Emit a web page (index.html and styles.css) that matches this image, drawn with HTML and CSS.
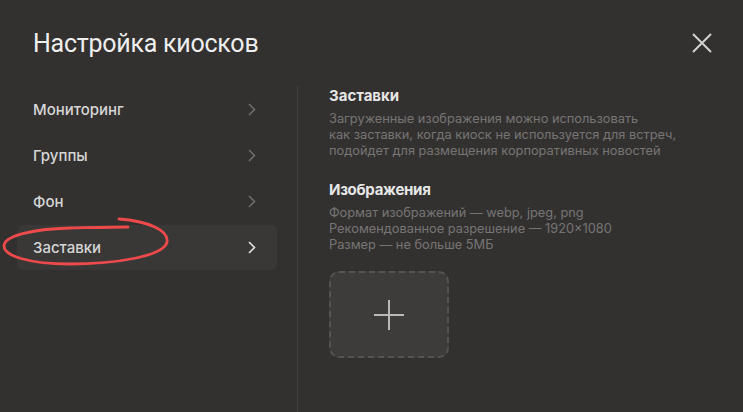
FILE: index.html
```html
<!DOCTYPE html>
<html lang="ru">
<head>
    <meta charset="UTF-8">
    <meta name="viewport" content="width=device-width, initial-scale=1.0">
    <title>Настройка киосков</title>
    <link rel="stylesheet" href="styles.css">
</head>
<body>
    <div class="dialog">
        <!-- Dialog header with title and close button -->
        <header class="dialog-header">
            <h1 class="dialog-title">Настройка киосков</h1>
            <button class="close-btn" aria-label="Закрыть">
                <svg width="20" height="20" viewBox="0 0 20 20">
                    <path d="M1 1 L19 19 M19 1 L1 19" stroke="#d2d2d2" stroke-width="2" fill="none"/>
                </svg>
            </button>
        </header>

        <div class="dialog-body">
            <!-- Left navigation -->
            <nav class="nav">
                <a class="nav-item">
                    <span>Мониторинг</span>
                    <svg class="chevron" width="8" height="13" viewBox="0 0 8 13"><path d="M1 1 L6.5 6.5 L1 12" stroke="currentColor" stroke-width="1.6" fill="none"/></svg>
                </a>
                <a class="nav-item">
                    <span>Группы</span>
                    <svg class="chevron" width="8" height="13" viewBox="0 0 8 13"><path d="M1 1 L6.5 6.5 L1 12" stroke="currentColor" stroke-width="1.6" fill="none"/></svg>
                </a>
                <a class="nav-item">
                    <span>Фон</span>
                    <svg class="chevron" width="8" height="13" viewBox="0 0 8 13"><path d="M1 1 L6.5 6.5 L1 12" stroke="currentColor" stroke-width="1.6" fill="none"/></svg>
                </a>
                <a class="nav-item active">
                    <span>Заставки</span>
                    <svg class="chevron" width="8" height="13" viewBox="0 0 8 13"><path d="M1 1 L6.5 6.5 L1 12" stroke="currentColor" stroke-width="1.6" fill="none"/></svg>
                </a>

                <!-- Red hand-drawn highlight around the active item -->
                <svg class="scribble" width="180" height="60" viewBox="0 0 180 60">
                    <path d="M119 3 C147 5, 169 14, 167 26 C164 40, 117 48, 69 48 C30 48, 4 40, 4 30 C4 20, 32 13, 70 12 C94 11.5, 114 11, 128 11"
                          stroke="#ee4a4c" stroke-width="2.8" fill="none" stroke-linecap="round"/>
                </svg>
            </nav>

            <!-- Right content -->
            <section class="content">
                <h2 class="section-title">Заставки</h2>
                <p class="section-text">
                    Загруженные изображения можно использовать<br>
                    как заставки, когда киоск не используется для встреч,<br>
                    подойдет для размещения корпоративных новостей
                </p>

                <h3 class="sub-title">Изображения</h3>
                <p class="section-text">
                    Формат изображений — webp, jpeg, png<br>
                    Рекомендованное разрешение — 1920×1080<br>
                    Размер — не больше 5МБ
                </p>

                <button class="upload-box" aria-label="Загрузить">
                    <svg width="32" height="32" viewBox="0 0 32 32">
                        <path d="M16 1 V31 M1 16 H31" stroke="#b9b9b9" stroke-width="2" fill="none"/>
                    </svg>
                </button>
            </section>
        </div>
    </div>
</body>
</html>
```

FILE: styles.css
```css
body {
    margin: 0;
    background-color: #333130;
    font-family: Inter, "Noto Sans", sans-serif;
    height: 100vh;
    overflow: hidden;
}

.dialog {
    height: 100%;
    display: flex;
    flex-direction: column;
}

.dialog-header {
    display: flex;
    justify-content: space-between;
    align-items: center;
    padding: 26px 31px 0 33px;
    height: 34px;
}

.dialog-title {
    margin: 0;
    font-family: Roboto, sans-serif;
    font-weight: 400;
    font-size: 25px;
    color: #efefef;
    letter-spacing: -0.25px;
}

.close-btn {
    background: none;
    border: none;
    padding: 0;
    width: 20px;
    height: 20px;
    cursor: pointer;
}

.dialog-body {
    flex: 1;
    display: flex;
    margin-top: 26px;
}

.nav {
    position: relative;
    width: 260px;
    margin-left: 17px;
    margin-right: 20px;
}

.nav-item {
    display: flex;
    justify-content: space-between;
    align-items: center;
    height: 46px;
    padding: 0 21px 0 16px;
    border-radius: 6px;
    font-size: 15px;
    font-weight: 500;
    color: #d6d6d6;
    cursor: pointer;
}

.nav-item .chevron {
    color: #6e6d6c;
}

.nav-item.active {
    background-color: #3a3837;
    height: 45px;
    margin-top: 1px;
}

.nav-item.active .chevron {
    color: #e2e2e2;
}

.scribble {
    position: absolute;
    left: -17px;
    top: 130px;
    overflow: visible;
    pointer-events: none;
}

.content {
    flex: 1;
    border-left: 1px solid #43413f;
    padding-left: 31px;
}

.section-title,
.sub-title {
    margin: 0;
    font-size: 15px;
    line-height: 20px;
    font-weight: 700;
    color: #e6e6e6;
}

.sub-title {
    margin-top: 21px;
    letter-spacing: -0.3px;
}

.section-text {
    margin: 5px 0 0;
    font-size: 12.8px;
    line-height: 16px;
    color: #777574;
}

.upload-box {
    margin-top: 18px;
    width: 120px;
    height: 87px;
    border: 2px dashed #555453;
    border-radius: 10px;
    background-color: #3d3c3b;
    display: flex;
    justify-content: center;
    align-items: center;
    padding: 0;
    cursor: pointer;
}
```
